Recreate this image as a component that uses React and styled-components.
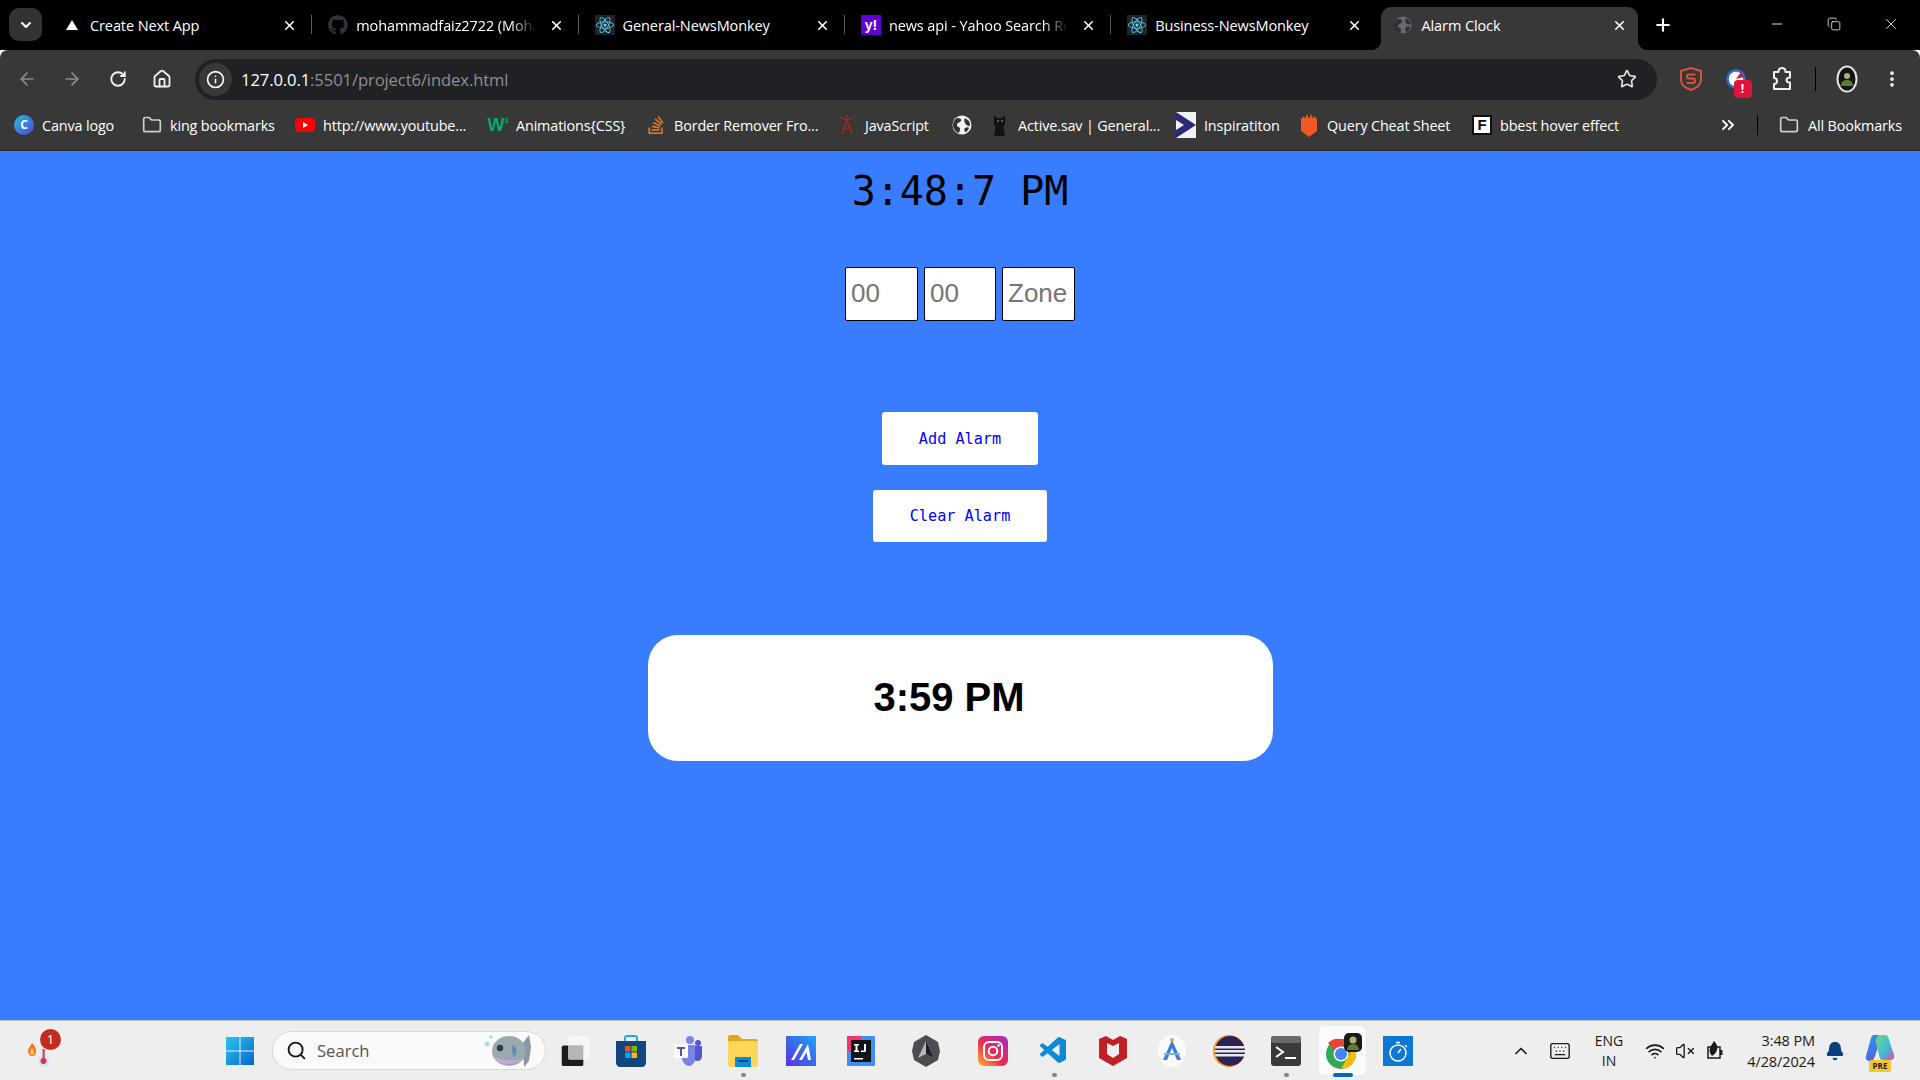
import styled, { createGlobalStyle } from 'styled-components';
import {
  ArrowLeft, ArrowRight, RotateCw, House, Info, Star, EllipsisVertical, Folder, X, Plus, Minus,
  Copy, ChevronDown, ChevronUp, Search, Wifi, VolumeX, Bell, ChevronsRight, Keyboard,
} from 'lucide-react';
import { FaGithub, FaReact } from 'react-icons/fa';
import { SiStackoverflow } from 'react-icons/si';
import { VscVscode } from 'react-icons/vsc';

const UI_FONT = '"Open Sans", "Noto Sans", sans-serif';
const MONO_FONT = '"DejaVu Sans Mono", "Liberation Mono", monospace';

const GlobalStyle = createGlobalStyle`
  html, body { margin: 0; padding: 0; width: 1920px; height: 1080px; overflow: hidden; }
  * { box-sizing: border-box; }
  body { font-family: ${UI_FONT}; }
`;

const Screen = styled.div`
  width: 1920px;
  height: 1080px;
  display: flex;
  flex-direction: column;
`;

/* tab strip */
const TabStrip = styled.div`
  height: 50px;
  background: #000;
  display: flex;
  align-items: flex-end;
  padding-left: 9px;
`;

const TabMenu = styled.div`
  width: 33px;
  height: 33px;
  margin-bottom: 9px;
  margin-right: 4px;
  border-radius: 10px;
  background: #333;
  color: #fff;
  display: flex;
  align-items: center;
  justify-content: center;
`;

const Tab = styled.div`
  position: relative;
  width: ${({ $active }) => ($active ? 257 : 266.3)}px;
  height: 43px;
  margin-left: ${({ $active }) => ($active ? 4 : 0)}px;
  padding: 0 ${({ $active }) => ($active ? 11 : 15)}px 7px ${({ $active }) => ($active ? 12 : 16)}px;
  display: flex;
  align-items: center;
  color: #fff;
  font-size: 14.5px;
  border-radius: 10px 10px 0 0;
  background: ${({ $active }) => ($active ? '#383838' : 'transparent')};

  ${({ $divider }) => $divider && `
    &::after {
      content: '';
      position: absolute;
      right: 0;
      top: 8px;
      height: 19px;
      width: 1px;
      background: #5a5a5a;
    }
  `}

  ${({ $active }) => $active && `
    &::before, &::after {
      content: '';
      position: absolute;
      bottom: 0;
      width: 10px;
      height: 10px;
    }
    &::before { left: -10px; background: radial-gradient(circle at 0 0, #000 10px, #383838 10.5px); }
    &::after { right: -10px; background: radial-gradient(circle at 100% 0, #000 10px, #383838 10.5px); }
  `}
`;

const TabIcon = styled.div`
  width: 20px;
  height: 20px;
  flex: none;
  margin-right: 8px;
  display: flex;
  align-items: center;
  justify-content: center;
`;

const TabTitle = styled.div`
  flex: 1;
  min-width: 0;
  white-space: nowrap;
  letter-spacing: -0.1px;
  ${({ $fade }) => $fade && `
    -webkit-mask-image: linear-gradient(to right, #000 80%, transparent 93%);
    mask-image: linear-gradient(to right, #000 80%, transparent 93%);
  `}
`;

const YahooBadge = styled.div`
  width: 20px;
  height: 20px;
  background: #5f01d1;
  color: #fff;
  font-family: "Liberation Sans", sans-serif;
  font-weight: 700;
  font-size: 14px;
  line-height: 20px;
  text-align: center;
`;

const ReactBadge = styled.div`
  width: 20px;
  height: 20px;
  background: #20232a;
  display: flex;
  align-items: center;
  justify-content: center;
`;

const NewTab = styled.div`
  width: 40px;
  height: 43px;
  padding-bottom: 7px;
  margin-left: 5px;
  color: #fff;
  display: flex;
  align-items: center;
  justify-content: center;
`;

const WindowControls = styled.div`
  margin-left: auto;
  align-self: stretch;
  display: flex;
  align-items: center;
  padding-right: 1px;
  padding-bottom: 2px;
  color: #ddd;
`;

const WindowButton = styled.div`
  width: 57px;
  display: flex;
  justify-content: center;
`;

/* toolbar */
const Toolbar = styled.div`
  height: 50px;
  background: #383838;
  border-radius: 8px 8px 0 0;
  display: flex;
  align-items: center;
  padding: 8px 3px 0 4px;
`;

const ToolButton = styled.div`
  width: ${({ $w }) => $w}px;
  flex: none;
  display: flex;
  align-items: center;
  justify-content: center;
  color: ${({ $dim }) => ($dim ? '#8b8b8b' : '#f0f0f0')};
`;

const AddressBar = styled.div`
  flex: 1;
  height: 41px;
  margin: 0 13px;
  border-radius: 21px;
  background: #202124;
  display: flex;
  align-items: center;
  padding: 0 20px 0 4px;
`;

const SiteInfo = styled.div`
  width: 33px;
  height: 33px;
  border-radius: 50%;
  background: #383838;
  color: #fff;
  display: flex;
  align-items: center;
  justify-content: center;
  margin-right: 9px;
`;

const Url = styled.div`
  flex: 1;
  font-size: 16.6px;
  letter-spacing: -0.1px;
  color: #8f8f8f;
`;

const UrlHost = styled.span`
  color: #fff;
`;

const ToolDivider = styled.div`
  width: 1px;
  height: 24px;
  background: #000;
  margin: 0 11px;
  flex: none;
`;

const ExtBadge = styled.div`
  position: absolute;
  right: -6px;
  bottom: -9px;
  width: 18px;
  height: 18px;
  border-radius: 4px;
  background: #e0123c;
  color: #fff;
  font-size: 12px;
  font-weight: 700;
  line-height: 18px;
  text-align: center;
`;

const ExtIcon = styled.div`
  position: relative;
  width: 20px;
  height: 20px;
`;

/* bookmarks */
const BookmarkBar = styled.div`
  height: 51px;
  background: #383838;
  border-bottom: 1px solid #2a2a2a;
  display: flex;
  align-items: center;
  padding-left: 14px;
  color: #fff;
  font-size: 14.4px;
  letter-spacing: -0.15px;
`;

const Bookmark = styled.div`
  width: ${({ $w }) => $w}px;
  flex: none;
  display: flex;
  align-items: center;
  white-space: nowrap;
`;

const BookmarkIcon = styled.div`
  width: 20px;
  height: 20px;
  flex: none;
  margin-right: ${({ $gap }) => $gap ?? 8}px;
  display: flex;
  align-items: center;
  justify-content: center;
  color: #cfcfcf;
`;

const CanvaLogo = styled.div`
  width: 20px;
  height: 20px;
  border-radius: 50%;
  background: linear-gradient(135deg, #1fc4d6, #5a3fe0);
  color: #fff;
  font-size: 12px;
  font-weight: 700;
  line-height: 20px;
  text-align: center;
`;

const W3Logo = styled.div`
  color: #04aa6d;
  font-family: "Liberation Sans", sans-serif;
  font-weight: 700;
  font-size: 18px;
  letter-spacing: 0;
`;

const W3Mark = styled.sup`
  font-size: 7px;
  vertical-align: top;
  line-height: 12px;
`;

const FLogo = styled.div`
  width: 20px;
  height: 20px;
  background: #fff;
  border: 2px solid #111;
  color: #111;
  font-family: "Liberation Sans", sans-serif;
  font-weight: 700;
  font-size: 15px;
  line-height: 16px;
  text-align: center;
`;

const BookmarkDivider = styled.div`
  width: 1px;
  height: 20px;
  background: #000;
  margin-right: 21px;
`;

/* page */
const Page = styled.main`
  flex: 1;
  background: #387cff;
  display: flex;
  flex-direction: column;
  align-items: center;
  padding-top: 17px;
`;

const ClockText = styled.div`
  font-family: ${MONO_FONT};
  font-size: 40px;
  line-height: 47px;
  color: #000;
`;

const TimeInputs = styled.div`
  display: flex;
  gap: 6px;
  margin-top: 52px;
`;

const TimeInput = styled.input`
  width: 73px;
  height: 54px;
  padding: 0 5px 2px;
  border: 1px solid #000;
  border-radius: 2px;
  background: #fff;
  font-family: "Liberation Sans", Arial, sans-serif;
  font-size: 26px;
  outline: none;

  &:nth-child(2) { width: 72px; }
  &::placeholder { color: #757575; opacity: 1; }
`;

const AlarmButton = styled.button`
  width: ${({ $w }) => $w}px;
  height: ${({ $h }) => $h}px;
  margin-top: ${({ $top }) => $top}px;
  border: none;
  border-radius: 3px;
  background: #fff;
  color: #0000ff;
  font-family: ${MONO_FONT};
  font-size: 15.2px;
  padding: 0;
`;

const AlarmCard = styled.div`
  width: 625px;
  height: 126px;
  margin-top: 93px;
  border-radius: 30px;
  background: #fff;
  display: flex;
  align-items: center;
  justify-content: center;
  padding: 0 22px 2px 0;
  font-family: "Liberation Sans", Arial, sans-serif;
  font-weight: 700;
  font-size: 40px;
  color: #000;
`;

/* taskbar */
const Taskbar = styled.div`
  height: 60px;
  background: #eeeeee;
  border-top: 1px solid #bcbcbc;
  display: flex;
  align-items: center;
`;

const WeatherSlot = styled.div`
  position: relative;
  width: 210px;
  padding-left: 27px;
  display: flex;
  align-items: center;
`;

const CountBadge = styled.div`
  position: absolute;
  left: 40px;
  top: -6px;
  width: 21px;
  height: 21px;
  border-radius: 50%;
  background: #c42b1c;
  color: #fff;
  font-size: 13px;
  line-height: 21px;
  text-align: center;
`;

const StartSlot = styled.div`
  width: 62px;
  display: flex;
  justify-content: flex-start;
  padding-left: 15px;
`;

const SearchPill = styled.div`
  width: 274px;
  height: 39px;
  flex: none;
  border-radius: 20px;
  border: 1px solid #d8d8d8;
  background: #fafafa;
  display: flex;
  align-items: center;
  padding: 0 12px 0 13px;
  color: #555;
  font-size: 16.6px;
`;

const SearchLabel = styled.span`
  flex: 1;
  margin-left: 10px;
`;

const TaskSlot = styled.div`
  position: relative;
  width: ${({ $w }) => $w}px;
  height: 49px;
  flex: none;
  display: flex;
  align-items: center;
  justify-content: center;
`;

const ActiveTile = styled.div`
  position: absolute;
  left: 50%;
  top: 0;
  width: 47px;
  height: 49px;
  margin-left: -24px;
  border-radius: 5px;
  background: #fbfbfb;
  box-shadow: 0 0 1px rgba(0, 0, 0, 0.15);
`;

const RunDot = styled.div`
  position: absolute;
  left: 50%;
  bottom: -2px;
  height: 4px;
  border-radius: 2px;
  width: ${({ $active }) => ($active ? 20 : 5)}px;
  margin-left: ${({ $active }) => ($active ? -10 : -2)}px;
  background: ${({ $active }) => ($active ? '#0067c0' : '#858585')};
`;

const IconLayer = styled.div`
  position: relative;
  display: flex;
`;

const Tray = styled.div`
  margin-left: auto;
  padding-right: 10px;
  display: flex;
  align-items: center;
  color: #1a1a1a;
`;

const TraySlot = styled.div`
  position: relative;
  width: ${({ $w }) => $w}px;
  flex: none;
  display: flex;
  align-items: center;
  justify-content: center;
`;

const LangText = styled.div`
  font-size: 14px;
  line-height: 20px;
  text-align: center;
`;

const TrayClock = styled.div`
  width: 88px;
  padding-right: 5px;
  text-align: right;
  font-size: 14.5px;
  line-height: 21px;
  white-space: nowrap;
  letter-spacing: -0.1px;
`;

const PreTag = styled.div`
  position: absolute;
  left: 19px;
  bottom: -5px;
  width: 22px;
  height: 12px;
  border-radius: 2px;
  background: #f7c52d;
  color: #222;
  font-size: 8px;
  font-weight: 700;
  line-height: 12px;
  text-align: center;
`;

/* drawn icons */
const GlobeFavicon = () => (
  <svg width="18" height="18" viewBox="0 0 18 18">
    <circle cx="9" cy="9" r="8.500" fill="#666a70" />
    <path d="M4 3c3 0 5 1 4 3S4 8 4 10s3 1 3 4c0 1 0 2-1 3-4-1-6-4-6-8 0-2 2-5 4-6zM12 2c2 1 4 3 5 6-2 1-4 0-5-1s-1-3 0-5zM12 11c2-1 4 0 4 1-1 2-2 4-4 4-1-2-1-4 0-5z" fill="#2e3033" />
  </svg>
);

const WindowsLogo = () => (
  <svg width="30" height="30" viewBox="0 0 30 30">
    <defs>
      <linearGradient id="win" x1="0" y1="0" x2="1" y2="1">
        <stop offset="0" stopColor="#28c5f5" />
        <stop offset="1" stopColor="#0668c9" />
      </linearGradient>
    </defs>
    <path d="M1 1h13.500v13.500H1zM15.500 1H29v13.500H15.500zM1 15.500h13.500V29H1zM15.500 15.500H29V29H15.500z" fill="url(#win)" />
  </svg>
);

const ThermoIcon = () => (
  <svg width="28" height="32" viewBox="0 0 28 32">
    <path d="M5 8c3 3 4 5 4 8s-2 5-4 5-4-2-4-5 3-5 4-8z" fill="#f4722b" />
    <path d="M5 13c1 1 2 2 2 4s-1 3-2 3-2-1-2-3 1-3 2-4z" fill="#fcc24a" />
    <rect x="14" y="2" width="5" height="22" rx="2.500" fill="#e8e8ee" />
    <circle cx="16.500" cy="26" r="5.500" fill="#cfe3f7" />
    <circle cx="16.500" cy="26" r="3" fill="#d8304f" />
    <rect x="15.600" y="14" width="2" height="11" fill="#d8304f" />
  </svg>
);

const FishIcon = () => (
  <svg width="50" height="36" viewBox="0 0 50 36">
    <circle cx="4" cy="11" r="2.500" fill="#a9dcef" />
    <circle cx="8" cy="4" r="1.700" fill="#a9dcef" />
    <path d="M40 10l6-8 2 12-2 14-5 6z" fill="#8a98a5" />
    <ellipse cx="26" cy="18" rx="17" ry="15" fill="#9aa9ae" />
    <path d="M10 23c6 10 22 11 30 2-6 3-20 4-30-2z" fill="#c6a8df" />
    <circle cx="17" cy="15" r="3.200" fill="#2f3d46" />
    <path d="M30 12c4 2 5 8 1 12-2-3-3-8-1-12z" fill="#5d8fae" />
  </svg>
);

const TaskViewIcon = () => (
  <svg width="36" height="30" viewBox="-6 0 36 32">
    <rect x="0" y="10" width="23" height="22" rx="2" fill="#1c1c1c" />
    <rect x="7" y="0" width="23" height="25" rx="2" fill="#f6f6f6" />
    <rect x="7" y="10" width="16" height="15" fill="#b5b5b5" />
  </svg>
);

const StoreIcon = () => (
  <svg width="30" height="32" viewBox="0 0 30 32">
    <path d="M9 6V3c0-1.500 1-2 2-2h8c1 0 2 .5 2 2v3" fill="none" stroke="#2aa5e4" strokeWidth="2" />
    <path d="M0 6h30v22c0 2-2 4-4 4H4c-2 0-4-2-4-4z" fill="#13457e" />
    <rect x="9" y="11" width="5.500" height="5.500" fill="#f25022" />
    <rect x="15.500" y="11" width="5.500" height="5.500" fill="#7fba00" />
    <rect x="9" y="17.500" width="5.500" height="5.500" fill="#00a4ef" />
    <rect x="15.500" y="17.500" width="5.500" height="5.500" fill="#ffb900" />
  </svg>
);

const TeamsIcon = () => (
  <svg width="28" height="30" viewBox="0 0 28 30">
    <circle cx="16" cy="4" r="4" fill="#7b83eb" />
    <circle cx="24" cy="7" r="3" fill="#5059c9" />
    <path d="M19 10h9v10c0 3-2 5-5 5-2 0-3-1-4-2z" fill="#5059c9" />
    <path d="M8 9h13v14c0 4-3 7-6 7s-6-3-7-7z" fill="#7b83eb" />
    <rect x="0" y="8" width="14" height="14" rx="1" fill="#fff" />
    <path d="M3 11h8v2H8v7H6v-7H3z" fill="#4b53bc" />
  </svg>
);

const ExplorerIcon = () => (
  <svg width="30" height="32" viewBox="0 0 30 32">
    <path d="M0 2c0-1 1-2 2-2h8l4 4h14c1 0 2 1 2 2v4H0z" fill="#e3a51c" />
    <path d="M0 6h30v24c0 1-1 2-2 2H2c-1 0-2-1-2-2z" fill="#fcd659" />
    <path d="M8 22h14c1 0 1 0 1 1v9H7v-9c0-1 0-1 1-1z" fill="#0e8bd8" />
    <rect x="10" y="25" width="10" height="2" fill="#064f8c" />
  </svg>
);

const MalIcon = () => (
  <svg width="30" height="30" viewBox="0 0 30 30">
    <defs>
      <linearGradient id="mal" x1="1" y1="0" x2="0" y2="1">
        <stop offset="0" stopColor="#1da5f5" />
        <stop offset="1" stopColor="#5a2de5" />
      </linearGradient>
    </defs>
    <rect width="30" height="30" fill="url(#mal)" />
    <path d="M5 24L14 8h3L8 24zM13 24L22 8l3 16h-3l-1.500-8-4.500 8z" fill="#fff" />
  </svg>
);

const IntellijIcon = () => (
  <svg width="28" height="30" viewBox="0 0 28 30">
    <rect width="28" height="30" rx="1" fill="#3d8ff2" />
    <rect x="0" y="0" width="14" height="15" fill="#f0366c" />
    <rect x="4" y="4" width="20" height="22" fill="#12121a" />
    <path d="M7 8h5v1.500h-1.500v5H12V16H7v-1.500h1.500v-5H7zM17 8h2v6.500c0 1-1 1.500-2 1.500h-3v-1.500h3z" fill="#fff" />
    <rect x="7" y="22" width="9" height="1.500" fill="#fff" />
  </svg>
);

const HexIcon = () => (
  <svg width="28" height="32" viewBox="0 0 28 32">
    <path d="M14 0l12 7 2 9-2 9-12 7-12-7-2-9 2-9z" fill="#4a4d51" />
    <path d="M14 6l8 17-8-4-8 4z" fill="#b5b7ba" />
    <path d="M14 6l8 17-8-4z" fill="#1d1f21" />
  </svg>
);

const InstagramIcon = () => (
  <svg width="30" height="30" viewBox="0 0 30 30">
    <defs>
      <linearGradient id="ig" x1="0" y1="1" x2="1" y2="0">
        <stop offset="0" stopColor="#fdb73b" />
        <stop offset="0.45" stopColor="#f0294f" />
        <stop offset="1" stopColor="#a22bc9" />
      </linearGradient>
    </defs>
    <rect width="30" height="30" rx="6" fill="url(#ig)" />
    <rect x="6" y="6" width="18" height="18" rx="5" fill="none" stroke="#fff" strokeWidth="2" />
    <circle cx="15" cy="15" r="4.300" fill="none" stroke="#fff" strokeWidth="2" />
    <circle cx="20.500" cy="9.500" r="1.300" fill="#fff" />
  </svg>
);

const McAfeeIcon = () => (
  <svg width="28" height="30" viewBox="0 0 28 30">
    <path d="M0 3l7-3 7 4 7-4 7 3v19L14 30 0 22z" fill="#c01f26" />
    <path d="M8 7l6 3 6-3v11l-6 4-6-4z" fill="#eeeeee" />
  </svg>
);

const AzureAIcon = () => (
  <svg width="30" height="32" viewBox="0 0 30 32">
    <ellipse cx="15" cy="16" rx="14" ry="16" fill="#fbfbfb" />
    <path d="M15 5l9 20h-4l-5-12-5 12H6z" fill="#3b7ddb" />
    <path d="M7 18h16v2H7z" fill="#7fb2ea" />
    <circle cx="15" cy="5" r="2" fill="#e5a33b" />
  </svg>
);

const EclipseIcon = () => (
  <svg width="32" height="32" viewBox="0 0 32 32">
    <circle cx="16" cy="16" r="16" fill="#f7941e" />
    <circle cx="17" cy="16" r="15" fill="#2c2255" />
    <path d="M2 11h30v2.500H2zM1.500 15h30.500v2.500H1.500zM2 19h30v2.500H2z" fill="#e6e6ef" />
  </svg>
);

const TerminalIcon = () => (
  <svg width="30" height="30" viewBox="0 0 30 30">
    <rect width="30" height="30" rx="3" fill="#3a3a3a" />
    <rect width="30" height="7" rx="3" fill="#6b6b6b" />
    <path d="M5 11l7 5-7 5" fill="none" stroke="#fff" strokeWidth="2" />
    <path d="M14 22h11" stroke="#fff" strokeWidth="2" />
  </svg>
);

const ChromeIcon = () => (
  <svg width="42" height="36" viewBox="-4 0 42 36">
    <circle cx="15" cy="21" r="15" fill="#34a853" />
    <path d="M15 6a15 15 0 0 1 13 7.500H15a7.500 7.500 0 0 0-6.500 3.800L2 10A15 15 0 0 1 15 6z" fill="#ea4335" />
    <path d="M28 13.500A15 15 0 0 1 15 36l6.500-11.300a7.500 7.500 0 0 0 0-11.200z" fill="#fbbc05" />
    <circle cx="15" cy="21" r="7.500" fill="#fff" />
    <circle cx="15" cy="21" r="6" fill="#4285f4" />
    <rect x="18" y="0" width="18" height="19" rx="5" fill="#1a1a1a" />
    <circle cx="27" cy="7" r="3.500" fill="#a8b56a" />
    <path d="M21 17c0-4 3-6 6-6s6 2 6 6z" fill="#5f7a35" />
  </svg>
);

const TimerTile = () => (
  <svg width="30" height="30" viewBox="0 0 30 30">
    <rect width="30" height="30" fill="#0b78d6" />
    <circle cx="15" cy="17" r="8" fill="none" stroke="#fff" strokeWidth="1.500" />
    <path d="M13 6.500h4M15 17l3-4M22 9l2 2" stroke="#fff" strokeWidth="1.500" fill="none" />
  </svg>
);

const CopilotIcon = () => (
  <svg width="30" height="32" viewBox="0 0 30 32">
    <defs>
      <linearGradient id="copA" x1="0" y1="0" x2="0.6" y2="1">
        <stop offset="0" stopColor="#1f9ee8" />
        <stop offset="1" stopColor="#5b5fe0" />
      </linearGradient>
      <linearGradient id="copB" x1="0" y1="0" x2="1" y2="1">
        <stop offset="0" stopColor="#7ed47c" />
        <stop offset="0.55" stopColor="#38c0d8" />
        <stop offset="1" stopColor="#e04fa8" />
      </linearGradient>
    </defs>
    <path d="M9 0h8L10 21c-1 3-2 5-5 5-3 0-5-2-4-5L6 3c.5-2 1.500-3 3-3z" fill="url(#copA)" />
    <path d="M15 0h5c2 0 3 1 3.500 3L29 20c1 3-1 5-4 5h-7c-2 0-3-1-3.500-3L11 8c-.5-2 .5-8 4-8z" fill="url(#copB)" />
    <path d="M6 27h13l-3 3H7z" fill="#e45a9e" />
  </svg>
);

const BatteryLeaf = () => (
  <svg width="22" height="22" viewBox="0 0 22 22">
    <path d="M3 7h12v11H3z" fill="none" stroke="#1a1a1a" strokeWidth="1.500" />
    <path d="M15 10h2.500v5H15z" fill="#1a1a1a" />
    <path d="M9 1c3 3 4 6 3 9s-3 5-5 6c-2-2-3-5-2-8s3-5 4-7z" fill="#1a1a1a" />
  </svg>
);

const JsTower = () => (
  <svg width="16" height="20" viewBox="0 0 16 20">
    <path d="M8 5L3 19M8 5l5 14M5 13h6M1 2l7 3 7-3M8 0v6" stroke="#b3202a" strokeWidth="1.300" fill="none" />
  </svg>
);

const WhiteGlobe = () => (
  <svg width="20" height="20" viewBox="0 0 20 20">
    <circle cx="10" cy="10" r="9.500" fill="#f4f4f4" />
    <path d="M5 3c3 0 5 1 4 3s-4 1-4 4 4 1 3 5l-1 3C3 17 1 13 1 10s2-6 4-7zM13 3l4 3c1 2 1 3 1 5-3 0-4-1-5-3s-1-3 0-5zM13 13c2-1 4-1 4 0-1 2-2 4-4 4-1-2-1-3 0-4z" fill="#333" />
  </svg>
);

const CatIcon = () => (
  <svg width="20" height="22" viewBox="0 0 20 22">
    <path d="M4 1l3 3h5l3-3v8c0 2-1 4-2 4l2 7c0 1-1 2-2 2H7c-2 0-3-1-3-2l2-7C5 13 4 11 4 9z" fill="#121212" />
    <circle cx="8" cy="7" r="1" fill="#777" />
    <circle cx="12" cy="7" r="1" fill="#777" />
  </svg>
);

const ChevronTile = () => (
  <svg width="20" height="26" viewBox="0 0 20 26">
    <rect width="20" height="26" fill="#f2f2f6" />
    <path d="M0 0l20 13L0 26V18l8-5-8-5z" fill="#2b2a78" />
  </svg>
);

const QueryIcon = () => (
  <svg width="18" height="24" viewBox="0 0 18 24">
    <path d="M1 6l3-3 1 3 2-5 2 5 2-5 2 5 1-3 3 3v12l-8 6-8-6z" fill="#ef5a24" />
  </svg>
);

const ShieldS = () => (
  <svg width="22" height="24" viewBox="0 0 22 24">
    <path d="M11 1l10 3v9c0 5-4 8-10 10C5 21 1 18 1 13V4z" fill="none" stroke="#d9533c" strokeWidth="2" />
    <path d="M15.500 7.500h-7c-2 0-2 4 0 4h5c2 0 2 4.500 0 4.500h-7" fill="none" stroke="#d9533c" strokeWidth="2" />
  </svg>
);

const ExtCircle = () => (
  <svg width="20" height="20" viewBox="0 0 20 20">
    <circle cx="10" cy="10" r="8.500" fill="#fff" stroke="#2f6ed8" strokeWidth="2.500" />
    <path d="M10 10L15 3l3 5z" fill="#e0123c" />
  </svg>
);

const PuzzlePiece = () => (
  <svg width="20" height="24" viewBox="0 0 20 24">
    <path d="M2 5h4.500c0-2.500 1.500-4 3.500-4s3.500 1.500 3.500 4H18v5.500c-2 0-3.500.5-3.500 2.500s1.500 2.500 3.500 2.500V22H2v-5c2 0 3-1 3-3s-1-3-3-3z" fill="none" stroke="#f0f0f0" strokeWidth="2" strokeLinejoin="round" />
  </svg>
);

const Avatar = () => (
  <svg width="22" height="28" viewBox="0 0 22 28">
    <ellipse cx="11" cy="14" rx="10.500" ry="13.500" fill="#e6e6e6" />
    <ellipse cx="11" cy="14" rx="8.500" ry="11.500" fill="#141414" />
    <circle cx="11" cy="11" r="3" fill="#a8b56a" />
    <path d="M5 21c0-4 2.500-6 6-6s6 2 6 6z" fill="#5f7a35" />
  </svg>
);

const tabs = [
  { title: 'Create Next App', icon: <svg width="14" height="14" viewBox="0 0 14 14"><path d="M7 2l6 10H1z" fill="#fff" /></svg>, divider: true },
  { title: 'mohammadfaiz2722 (Moha', fade: true, icon: <FaGithub size={20} color="#30363d" />, divider: true },
  { title: 'General-NewsMonkey', icon: <ReactBadge><FaReact size={18} color="#61dafb" /></ReactBadge>, divider: true },
  { title: 'news api - Yahoo Search Re', fade: true, icon: <YahooBadge>y!</YahooBadge>, divider: true },
  { title: 'Business-NewsMonkey', icon: <ReactBadge><FaReact size={18} color="#61dafb" /></ReactBadge> },
  { title: 'Alarm Clock', icon: <GlobeFavicon />, active: true },
];

const bookmarks = [
  { w: 128, label: 'Canva logo', icon: <CanvaLogo>C</CanvaLogo> },
  { w: 153, label: 'king bookmarks', icon: <Folder size={20} /> },
  { w: 193, label: 'http://www.youtube...', icon: <svg width="20" height="14" viewBox="0 0 20 14"><rect width="20" height="14" rx="4" fill="#f00" /><path d="M8 4l5 3-5 3z" fill="#fff" /></svg> },
  { w: 158, label: 'Animations{CSS}', icon: <W3Logo>W<W3Mark>3</W3Mark></W3Logo> },
  { w: 191, label: 'Border Remover Fro...', icon: <SiStackoverflow size={18} color="#e87922" /> },
  { w: 115, label: 'JavaScript', icon: <JsTower /> },
  { w: 38, icon: <WhiteGlobe /> },
  { w: 186, label: 'Active.sav | General...', icon: <CatIcon /> },
  { w: 123, label: 'Inspiratiton', icon: <ChevronTile /> },
  { w: 173, label: 'Query Cheat Sheet', icon: <QueryIcon /> },
  { w: 246, label: 'bbest hover effect', icon: <FLogo>F</FLogo> },
];

const taskIcons = [
  { w: 54, icon: <TaskViewIcon /> },
  { w: 62, icon: <StoreIcon /> },
  { w: 52, icon: <TeamsIcon /> },
  { w: 58, icon: <ExplorerIcon />, running: true },
  { w: 58, icon: <MalIcon /> },
  { w: 62, icon: <IntellijIcon /> },
  { w: 68, icon: <HexIcon /> },
  { w: 66, icon: <InstagramIcon /> },
  { w: 56, icon: <VscVscode size={32} color="#0a8ad8" />, running: true },
  { w: 62, icon: <McAfeeIcon /> },
  { w: 56, icon: <AzureAIcon /> },
  { w: 58, icon: <EclipseIcon /> },
  { w: 56, icon: <TerminalIcon />, running: true },
  { w: 58, icon: <ChromeIcon />, active: true },
  { w: 52, icon: <TimerTile /> },
];

function App() {
  return (
    <Screen>
      <GlobalStyle />
      <TabStrip>
        <TabMenu><ChevronDown size={16} strokeWidth={3} /></TabMenu>
        {tabs.map((tab) => (
          <Tab key={tab.title} $active={tab.active} $divider={tab.divider}>
            <TabIcon>{tab.icon}</TabIcon>
            <TabTitle $fade={tab.fade}>{tab.title}</TabTitle>
            <X size={15} strokeWidth={2.5} color="#fff" />
          </Tab>
        ))}
        <NewTab><Plus size={20} strokeWidth={2.5} /></NewTab>
        <WindowControls>
          <WindowButton><Minus size={16} strokeWidth={1.5} /></WindowButton>
          <WindowButton><Copy size={14} strokeWidth={1.5} /></WindowButton>
          <WindowButton><X size={18} strokeWidth={1.3} /></WindowButton>
        </WindowControls>
      </TabStrip>

      <Toolbar>
        <ToolButton $w={46} $dim><ArrowLeft size={20} /></ToolButton>
        <ToolButton $w={44} $dim><ArrowRight size={20} /></ToolButton>
        <ToolButton $w={48}><RotateCw size={18} strokeWidth={2.5} /></ToolButton>
        <ToolButton $w={40}><House size={20} strokeWidth={2.2} /></ToolButton>
        <AddressBar>
          <SiteInfo><Info size={19} strokeWidth={2} /></SiteInfo>
          <Url><UrlHost>127.0.0.1</UrlHost>:5501/project6/index.html</Url>
          <Star size={20} color="#e3e3e3" strokeWidth={2} />
        </AddressBar>
        <ToolButton $w={41}><ShieldS /></ToolButton>
        <ToolButton $w={49}><ExtIcon><ExtCircle /><ExtBadge>!</ExtBadge></ExtIcon></ToolButton>
        <ToolButton $w={44}><PuzzlePiece /></ToolButton>
        <ToolDivider />
        <ToolButton $w={40}><Avatar /></ToolButton>
        <ToolButton $w={50}><EllipsisVertical size={20} strokeWidth={2.5} /></ToolButton>
      </Toolbar>

      <BookmarkBar>
        {bookmarks.map((b) => (
          <Bookmark key={b.label || 'globe'} $w={b.w}>
            <BookmarkIcon>{b.icon}</BookmarkIcon>
            {b.label}
          </Bookmark>
        ))}
        <Bookmark $w={39}><ChevronsRight size={20} strokeWidth={2.2} /></Bookmark>
        <BookmarkDivider />
        <Bookmark $w={120}>
          <BookmarkIcon $gap={9}><Folder size={20} /></BookmarkIcon>
          All Bookmarks
        </Bookmark>
      </BookmarkBar>

      <Page>
        <ClockText>3:48:7 PM</ClockText>
        <TimeInputs>
          <TimeInput placeholder="00" />
          <TimeInput placeholder="00" />
          <TimeInput placeholder="Zone" />
        </TimeInputs>
        <AlarmButton $w={156} $h={53} $top={91}>Add Alarm</AlarmButton>
        <AlarmButton $w={174} $h={52} $top={25}>Clear Alarm</AlarmButton>
        <AlarmCard>3:59 PM</AlarmCard>
      </Page>

      <Taskbar>
        <WeatherSlot>
          <ThermoIcon />
          <CountBadge>1</CountBadge>
        </WeatherSlot>
        <StartSlot><WindowsLogo /></StartSlot>
        <SearchPill>
          <Search size={21} color="#1a1a1a" strokeWidth={2.2} />
          <SearchLabel>Search</SearchLabel>
          <FishIcon />
        </SearchPill>
        {taskIcons.map((item, i) => (
          <TaskSlot key={i} $w={item.w}>
            {item.active && <ActiveTile />}
            <IconLayer>{item.icon}</IconLayer>
            {(item.running || item.active) && <RunDot $active={item.active} />}
          </TaskSlot>
        ))}
        <Tray>
          <TraySlot $w={42}><ChevronUp size={20} strokeWidth={2} /></TraySlot>
          <TraySlot $w={36}><Keyboard size={22} strokeWidth={1.5} /></TraySlot>
          <TraySlot $w={62}><LangText>ENG<br />IN</LangText></TraySlot>
          <TraySlot $w={30}><Wifi size={20} strokeWidth={2} /></TraySlot>
          <TraySlot $w={30}><VolumeX size={20} strokeWidth={1.6} /></TraySlot>
          <TraySlot $w={32}><BatteryLeaf /></TraySlot>
          <TrayClock>3:48 PM<br />4/28/2024</TrayClock>
          <TraySlot $w={30}><Bell size={20} fill="#0b3f80" color="#0b3f80" /></TraySlot>
          <TraySlot $w={60}><CopilotIcon /><PreTag>PRE</PreTag></TraySlot>
        </Tray>
      </Taskbar>
    </Screen>
  );
}

export default App;
